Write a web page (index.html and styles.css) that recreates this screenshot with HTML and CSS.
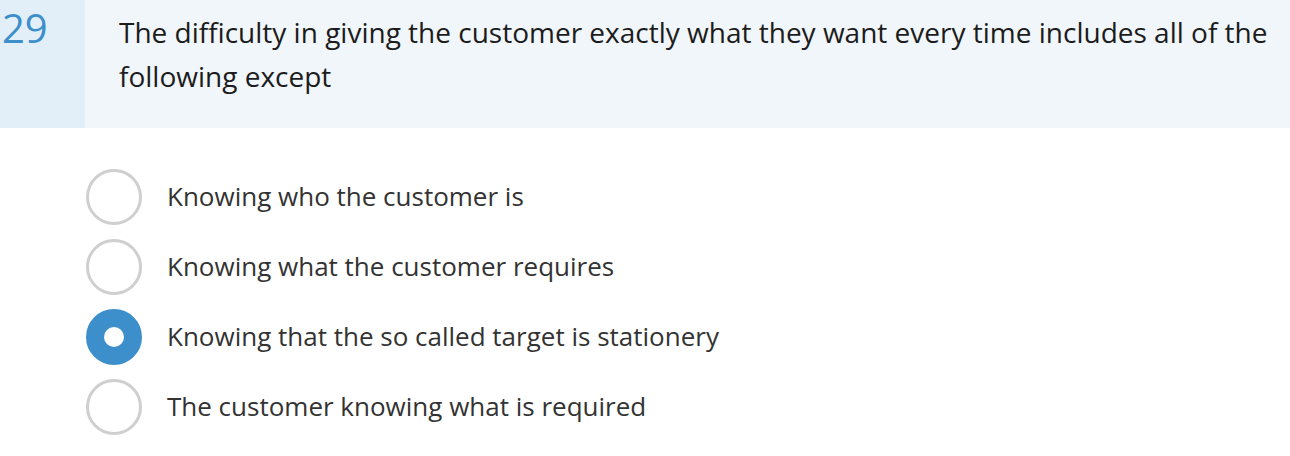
FILE: index.html
```html
<!DOCTYPE html>
<html lang="en">
<head>
    <meta charset="UTF-8">
    <title>Question 29</title>
    <link rel="stylesheet" href="styles.css">
</head>
<body>

<div class="question">
    <div class="q-number">29</div>
    <div class="q-text">The difficulty in giving the customer exactly what they want every time includes all of the following except</div>
</div>

<ul class="options">
    <li class="option"><span class="radio"></span><span class="label">Knowing who the customer is</span></li>
    <li class="option"><span class="radio"></span><span class="label">Knowing what the customer requires</span></li>
    <li class="option selected"><span class="radio"></span><span class="label">Knowing that the so called target is stationery</span></li>
    <li class="option"><span class="radio"></span><span class="label">The customer knowing what is required</span></li>
</ul>

</body>
</html>
```
FILE: styles.css
```css
body {
    margin: 0;
    font-family: "Open Sans", sans-serif;
    background-color: #fff;
}
.question {
    display: flex;
    height: 128px;
}
.q-number {
    width: 85px;
    background-color: #e3eff8;
    color: #3d8fcc;
    font-size: 40px;
    line-height: 1;
    padding: 8px 0 0 2px;
    box-sizing: border-box;
}
.q-text {
    flex: 1;
    background-color: #f1f6fb;
    color: #1c1c1c;
    font-size: 28px;
    line-height: 44px;
    padding: 10px 10px 0 34px;
}
.options {
    list-style: none;
    margin: 0;
    padding: 41px 0 0 86px;
}
.option {
    display: flex;
    align-items: center;
    height: 56px;
    margin-bottom: 14px;
}
.radio {
    flex-shrink: 0;
    width: 56px;
    height: 56px;
    box-sizing: border-box;
    border: 3px solid #cfcfcf;
    border-radius: 50%;
    display: flex;
    align-items: center;
    justify-content: center;
}
.option.selected .radio {
    background-color: #3d8fcc;
    border-color: #3d8fcc;
}
.option.selected .radio::after {
    content: "";
    width: 20px;
    height: 20px;
    border-radius: 50%;
    background-color: #fff;
}
.label {
    margin-left: 25px;
    font-size: 26px;
    color: #333;
    margin-top: -3px;
}
```
